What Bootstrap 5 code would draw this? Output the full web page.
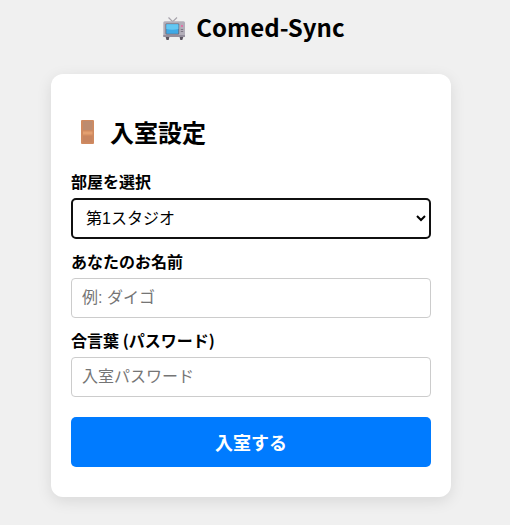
<!DOCTYPE html>
<html lang="ja">
<head>
<meta charset="utf-8">
<title>Comed-Sync</title>
<link href="https://cdn.jsdelivr.net/npm/bootstrap@5.3.0/dist/css/bootstrap.min.css" rel="stylesheet">
<style>
html, body { height: 525px; overflow: hidden; }
body { background: #f0f0f0; color: #000; font-family: "Noto Sans CJK JP", "Noto Sans", sans-serif; padding-right: 8px; }
.app-title { font-size: 24px; font-weight: 700; line-height: 34px; margin: 0; padding-top: 10px; padding-left: 5px; height: 74px; gap: 10px; }
.emoji-ic { flex: none; display: block; }
.tv-ic { margin-top: 7px; }
.room-panel { width: 400px; height: 423px; background: #fff; border-radius: 12px; padding: 39px 20px 30px; box-shadow: 0 4px 15px rgba(0,0,0,.1); }
.panel-title { font-size: 24px; font-weight: 700; line-height: 38px; margin: 0 0 19px; gap: 16px; padding-left: 10px; }
.fld-label { font-size: 16px; font-weight: 700; line-height: 23px; margin: 0 0 5px; display: block; }
.fld-input.form-control, .fld-input.form-select {
  height: 40px; font-size: 16px; border-radius: 4px; border: 1px solid #ccc; padding: 0 10px; color: #000;
  font-family: "Liberation Sans", "Noto Sans CJK JP", sans-serif; box-shadow: none;
}
.fld-input.form-control::placeholder { color: #757575; opacity: 1; }
.fld-input.form-select {
  appearance: auto; -webkit-appearance: auto; background-image: none; height: 41px; padding: 0 0 0 9px;
  border: 2px solid #101010; border-radius: 5px;
}
.fld-gap { margin-bottom: 11px; }
.enter-btn.btn { height: 50px; background: #007bff; border: 0; border-radius: 5px; font-size: 18px; font-weight: 700; color: #fff; margin-top: 20px; padding: 0; font-family: inherit; }
</style>
</head>
<body>
<h1 class="app-title d-flex justify-content-center align-items-start">
  <svg class="emoji-ic tv-ic" width="24" height="23" viewBox="0 0 24 23" aria-hidden="true">
    <path d="M6.500 .5 10.700 4.700 15 .5" stroke="#a8a4ac" stroke-width="1.200" fill="none"/>
    <path d="M3.500 19.500h4l-.8 3.500H4.500zM17.500 19.500h4l-1.200 3.500h-2z" fill="#5b5560"/>
    <rect x="1.300" y="4.300" width="21.700" height="15.700" rx="1.500" fill="#b3aeb9"/>
    <rect x="1.300" y="18" width="21.700" height="2" fill="#948e9c"/>
    <rect x="3.500" y="6.500" width="13.700" height="11" rx="1" fill="#6a6472"/>
    <rect x="4.300" y="7.300" width="12.100" height="9.400" rx=".5" fill="#3fa9e6"/>
    <path d="M4.300 7.300h12.100v4.700c-4 1-8 1-12.100 0z" fill="#63c7f2"/>
    <circle cx="20" cy="9" r="1" fill="#ef5fa0"/>
    <rect x="18.800" y="12" width="2.400" height="1" fill="#7d7785"/>
    <rect x="18.800" y="14" width="2.400" height="1" fill="#7d7785"/>
  </svg>
  <span>Comed-Sync</span>
</h1>
<main class="room-panel mx-auto">
  <h2 class="panel-title d-flex align-items-center">
    <svg class="emoji-ic" width="13" height="24" viewBox="0 0 13 24" aria-hidden="true">
      <rect width="13" height="24" rx="1" fill="#d08a60"/>
      <rect x="2" y="1" width="9.500" height="9" fill="#bd8b6f"/>
      <rect x="2" y="11.500" width="9.500" height="3" fill="#e39f70"/>
      <rect x="2" y="16" width="9.500" height="6.500" fill="#c88560"/>
    </svg>
    <span>入室設定</span>
  </h2>
  <form>
    <label class="fld-label" for="room">部屋を選択</label>
    <select class="form-select fld-input fld-gap" id="room"><option>第1スタジオ</option></select>
    <label class="fld-label" for="name">あなたのお名前</label>
    <input class="form-control fld-input fld-gap" id="name" type="text" placeholder="例: ダイゴ">
    <label class="fld-label" for="pass">合言葉 (パスワード)</label>
    <input class="form-control fld-input" id="pass" type="text" placeholder="入室パスワード">
    <button class="btn enter-btn w-100" type="button">入室する</button>
  </form>
</main>
<script src="https://cdn.jsdelivr.net/npm/bootstrap@5.3.0/dist/js/bootstrap.bundle.min.js"></script>
</body>
</html>
